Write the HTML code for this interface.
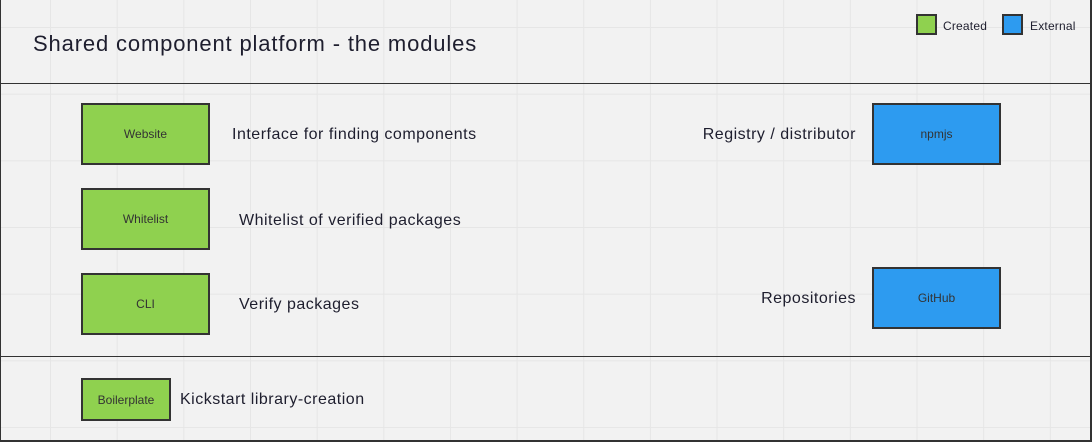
<!DOCTYPE html>
<html><head><meta charset="utf-8"><style>
body{margin:0}
#c{position:relative;width:1092px;height:442px;overflow:hidden;background-color:#f2f2f2;
background-image:linear-gradient(to right,#e6e6e6 1px,transparent 1px),linear-gradient(to bottom,#e6e6e6 1px,transparent 1px);
background-size:66.67px 66.67px;background-position:50px 27px;font-family:"Liberation Sans",sans-serif;color:#1e1e2e}
.a{position:absolute}
.box{position:absolute;border:2px solid #333;box-sizing:border-box;display:flex;align-items:center;justify-content:center;font-size:12px;color:#333}
.g{background:#8fd14f}.b{background:#2d9bf0}
.t{position:absolute;font-size:16px;white-space:nowrap;line-height:20px;letter-spacing:0.5px}
.r{text-align:right}
</style></head><body><div id="c">
<div class="a" style="left:0;top:0;width:1px;height:442px;background:#333"></div>
<div class="a" style="left:1090px;top:0;width:2px;height:442px;background:#333"></div>
<div class="a" style="left:0;top:83px;width:1092px;height:1px;background:#333"></div>
<div class="a" style="left:0;top:356px;width:1092px;height:1px;background:#333"></div>
<div class="a" style="left:0;top:440px;width:1092px;height:2px;background:#333"></div>
<div class="t" style="left:33px;top:31px;font-size:22px;line-height:26px;letter-spacing:0.85px">Shared component platform - the modules</div>
<div class="box g" style="left:916px;top:14px;width:21px;height:21px"></div>
<div class="t" style="left:943px;top:18px;font-size:12px;line-height:16px;letter-spacing:0.2px">Created</div>
<div class="box b" style="left:1002px;top:14px;width:21px;height:21px"></div>
<div class="t" style="left:1030px;top:18px;font-size:12px;line-height:16px;letter-spacing:0.2px">External</div>
<div class="box g" style="left:81px;top:103px;width:129px;height:62px">Website</div>
<div class="t" style="left:232px;top:125px">Interface for finding components</div>
<div class="box g" style="left:81px;top:188px;width:129px;height:62px">Whitelist</div>
<div class="t" style="left:239px;top:211px">Whitelist of verified packages</div>
<div class="box g" style="left:81px;top:273px;width:129px;height:62px">CLI</div>
<div class="t" style="left:239px;top:295px">Verify packages</div>
<div class="box b" style="left:872px;top:103px;width:129px;height:62px">npmjs</div>
<div class="t r" style="right:236px;top:125px">Registry / distributor</div>
<div class="box b" style="left:872px;top:267px;width:129px;height:62px">GitHub</div>
<div class="t r" style="right:236px;top:289px">Repositories</div>
<div class="box g" style="left:81px;top:378px;width:90px;height:43px">Boilerplate</div>
<div class="t" style="left:180px;top:390px">Kickstart library-creation</div>
</div></body></html>
